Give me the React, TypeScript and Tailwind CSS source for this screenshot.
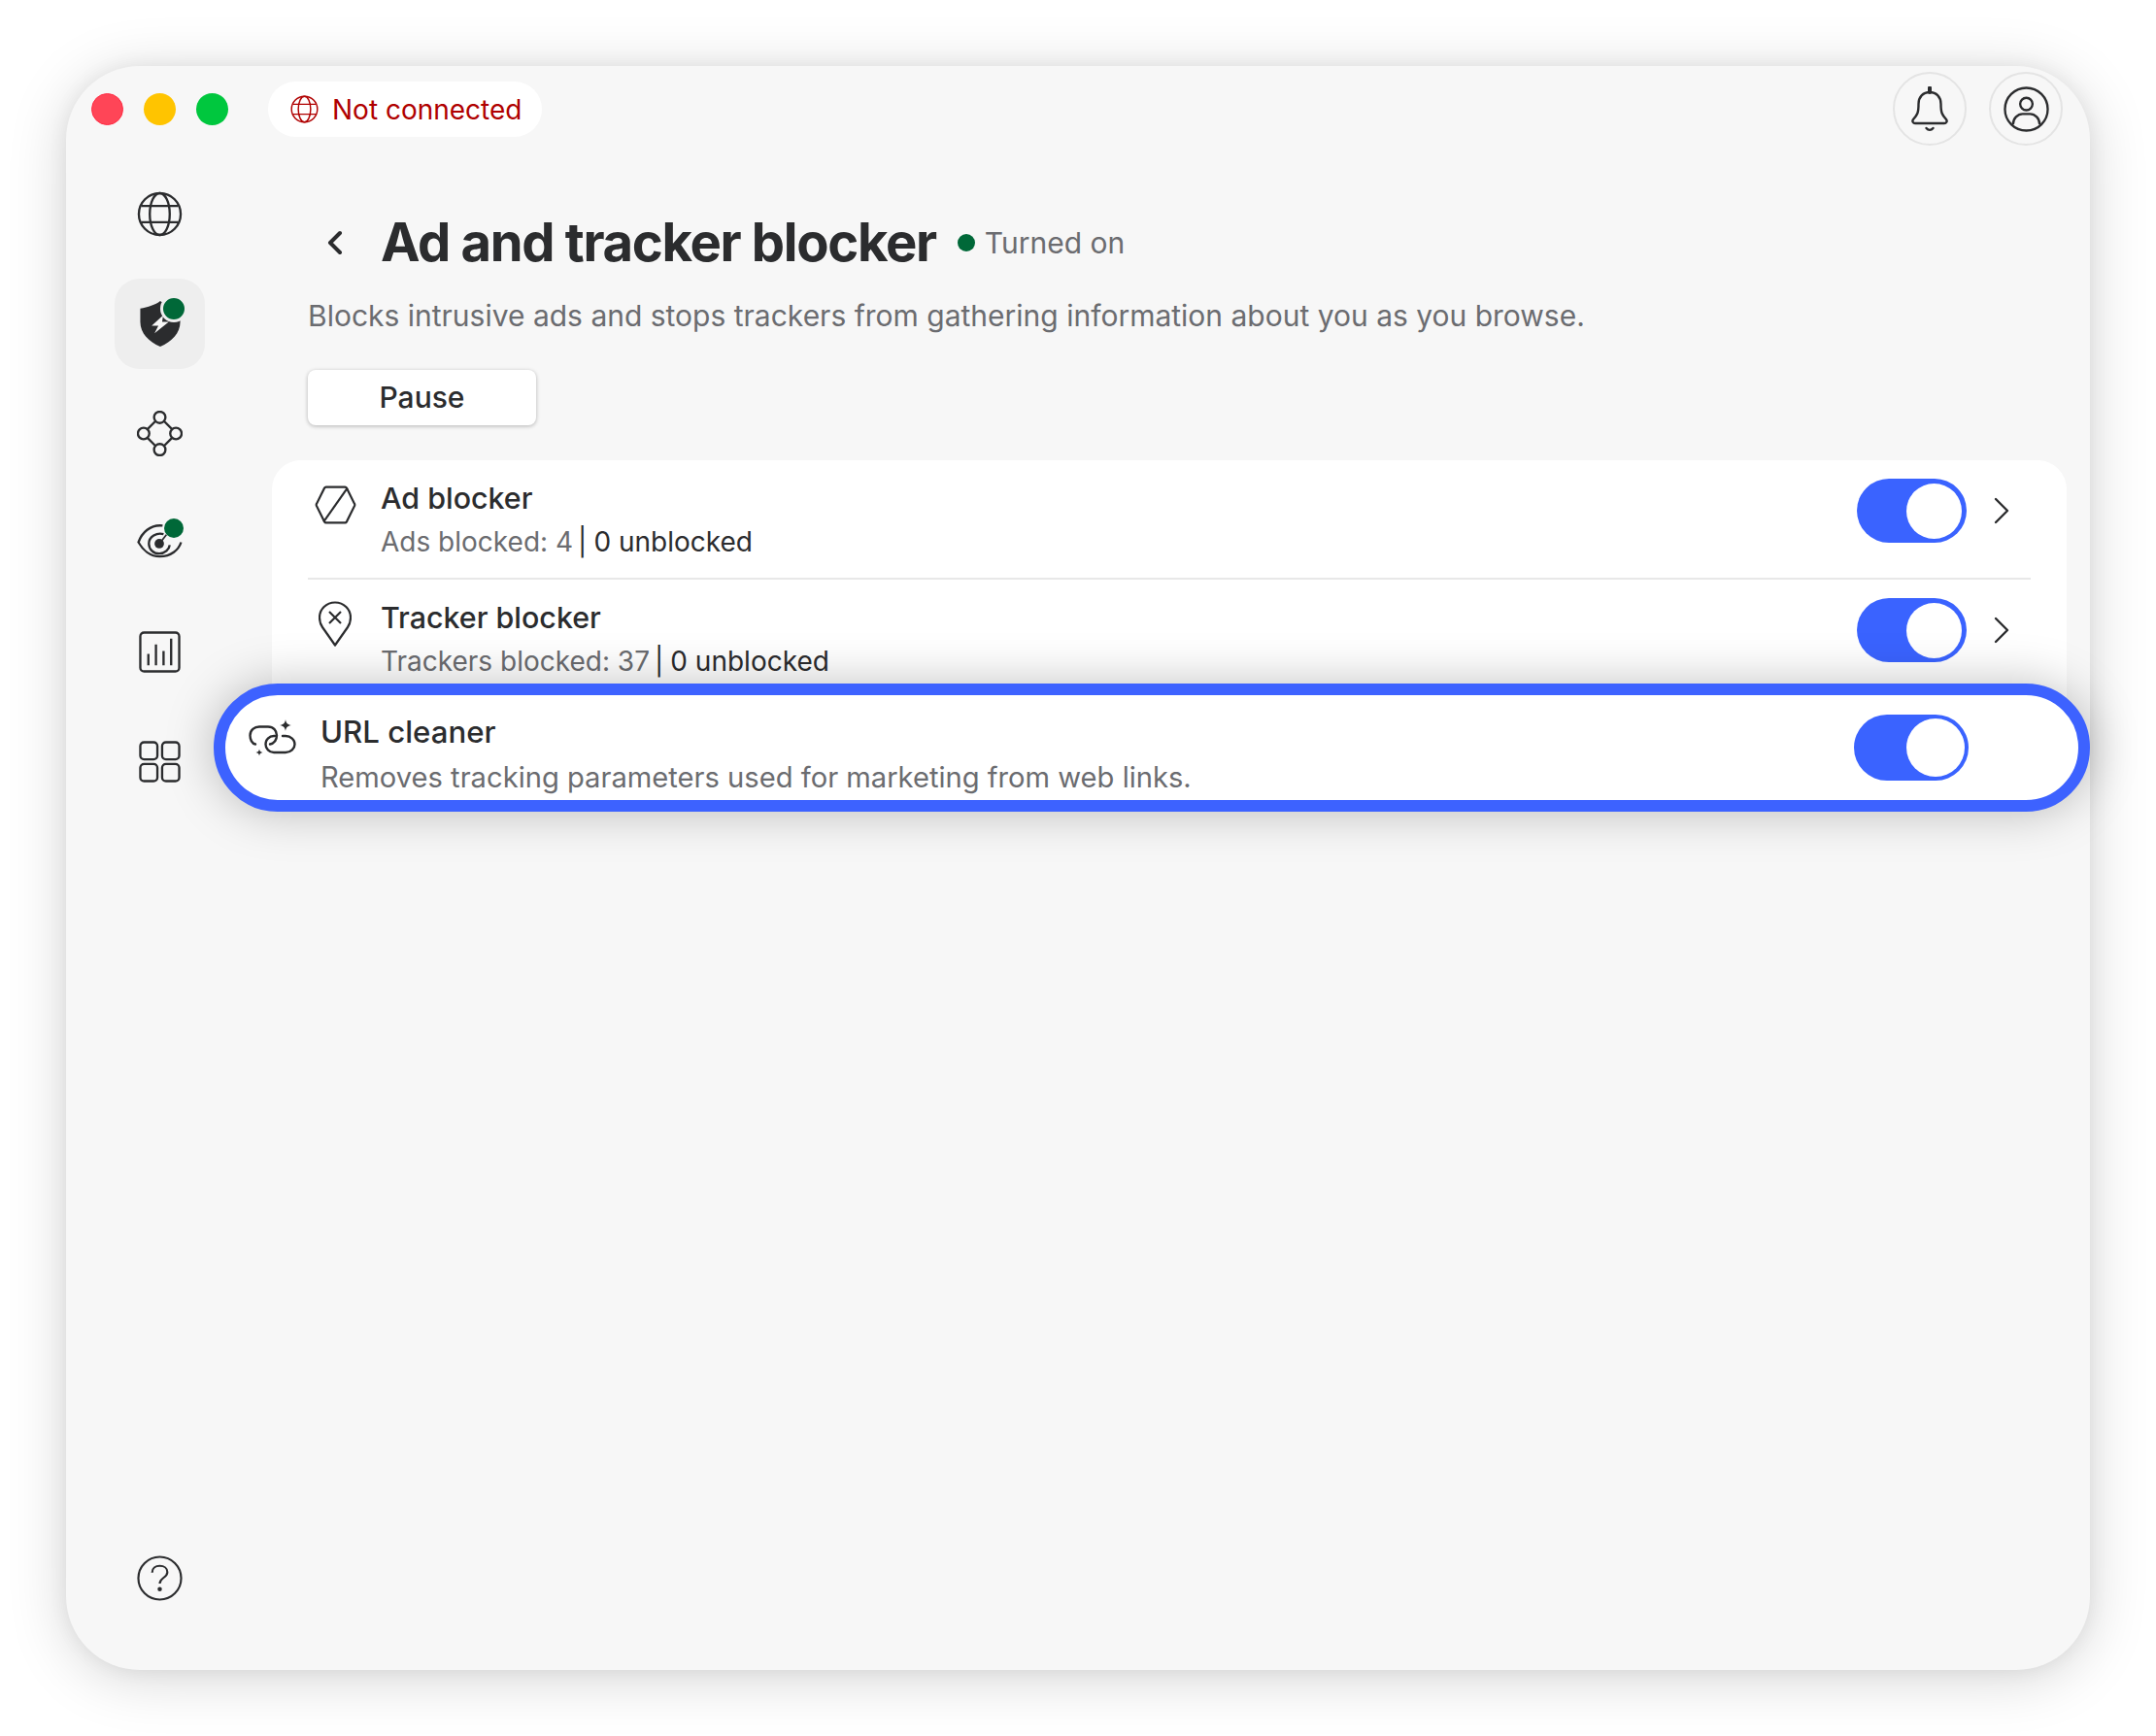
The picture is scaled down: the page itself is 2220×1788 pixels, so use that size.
import React from 'react';
import { ChevronLeft, ChevronRight } from 'lucide-react';

const iconStroke = '#2b2c2e';

const GlobeIcon: React.FC<{ className: string; color?: string }> = ({ className, color = iconStroke }) => (
  <svg viewBox="0 0 48 48" fill="none" stroke={color} strokeWidth="2.4" className={className}>
    <circle cx="24" cy="24" r="22" />
    <ellipse cx="24" cy="24" rx="10.5" ry="22" />
    <path d="M4.5 15.5h39M4.5 32.5h39" />
  </svg>
);

const ShieldIcon = () => (
  <svg viewBox="0 0 42 48" className="w-[42px] h-[47px]">
    <path
      d="M21 0C16 4 8 6.500 0 8v14c0 12 9 21 21 26 12-5 21-14 21-26V8C34 6.500 26 4 21 0Z"
      fill={iconStroke}
    />
    <path d="M24 15 12 26h7l-4 8 15-12h-7l1-7Z" fill="#f7f7f7" />
  </svg>
);

const NetworkIcon = () => (
  <svg viewBox="0 0 48 48" fill="none" stroke={iconStroke} strokeWidth="2.4" className="w-[47px] h-[47px]">
    <circle cx="24" cy="7" r="6" />
    <circle cx="24" cy="41" r="6" />
    <circle cx="7" cy="24" r="6" />
    <circle cx="41" cy="24" r="6" />
    <path d="M19.500 11 11 19.500M28.500 11 37 19.500M11 28.500 19.500 37M37 28.500 28.500 37" />
  </svg>
);

const EyeIcon = () => (
  <svg viewBox="0 0 48 40" fill="none" stroke={iconStroke} strokeWidth="2.4" className="w-[47px] h-[39px]">
    <path d="M27 2.500C14 1 5 10 1.500 20 6 28 14 35 24 35 36 35 44 28 46.500 20" />
    <path d="M28 11.500C21 9.500 12.500 14 12.500 21.500 12.500 27.500 17.500 32 23.500 32 29.500 32 34 27.500 34.500 23" />
    <circle cx="23.500" cy="21.500" r="5" fill={iconStroke} stroke="none" />
    <path d="M24 21 31 12" strokeWidth="1.800" />
  </svg>
);

const ChartIcon = () => (
  <svg viewBox="0 0 44 44" fill="none" stroke={iconStroke} strokeWidth="2.4" className="w-[43px] h-[43px]">
    <rect x="1.500" y="1.500" width="41" height="41" rx="4" />
    <path d="M10 36V24M18 36V14M26 36V21M34 36V8" />
  </svg>
);

const GridIcon = () => (
  <svg viewBox="0 0 44 44" fill="none" stroke={iconStroke} strokeWidth="2.4" className="w-[43px] h-[43px]">
    <rect x="1.500" y="1.500" width="18" height="18" rx="4" />
    <rect x="24.500" y="1.500" width="18" height="18" rx="4" />
    <rect x="1.500" y="24.500" width="18" height="18" rx="4" />
    <rect x="24.500" y="24.500" width="18" height="18" rx="4" />
  </svg>
);

const HelpIcon = () => (
  <svg viewBox="0 0 48 48" fill="none" stroke={iconStroke} strokeWidth="2.2" className="w-[47px] h-[47px]">
    <circle cx="24" cy="24" r="22.500" />
    <path d="M16 18c0-4.500 3.500-7 8-7s8 2.500 8 6.500c0 6-8 6-8 12" />
    <circle cx="24" cy="35.500" r="1.200" fill={iconStroke} />
  </svg>
);

const BellIcon = () => (
  <svg viewBox="0 0 38 47" fill="none" stroke={iconStroke} strokeWidth="2.4" className="w-[38px] h-[47px]">
    <path d="M19 6c-7 0-11.500 5-11.500 12 0 9-1 11-5.500 16-1.500 2 0 4 2 4h30c2 0 3.500-2 2-4-4.500-5-5.500-7-5.500-16C30.500 11 26 6 19 6Z" />
    <path d="M19 6V1.500" strokeWidth="4" strokeLinecap="round" />
    <path d="M15.500 43c2 2.500 5 2.500 7 0" strokeLinecap="round" />
  </svg>
);

const UserIcon = () => (
  <svg viewBox="0 0 48 48" fill="none" stroke={iconStroke} strokeWidth="2.4" className="w-[47px] h-[47px]">
    <circle cx="24" cy="24" r="22.500" />
    <circle cx="24" cy="18.500" r="6.500" />
    <path d="M10 40c0-6.500 5-11 10-11h8c5 0 10 4.500 10 11" />
  </svg>
);

const HexIcon = () => (
  <svg viewBox="0 0 44 38" fill="none" stroke={iconStroke} strokeWidth="2.2" strokeLinejoin="round" preserveAspectRatio="none" className="w-[43px] h-[40px] mt-[2px]">
    <path d="M12 1.500h20a2 2 0 0 1 1.700 1L42 18a2 2 0 0 1 0 2l-8.300 15.500a2 2 0 0 1-1.700 1H12a2 2 0 0 1-1.700-1L2 20a2 2 0 0 1 0-2l8.300-15.500a2 2 0 0 1 1.700-1Z" />
    <path d="M34.500 2.500 9.500 35.500" />
  </svg>
);

const PinIcon = () => (
  <svg viewBox="0 0 34 47" fill="none" stroke={iconStroke} strokeWidth="2.2" className="w-[34px] h-[47px] mt-[-2px]">
    <path d="M17 45.500 4 27C1.500 23.500 1 20.500 1 17 1 8.500 8 1.500 17 1.500S33 8.500 33 17c0 3.500-.5 6.500-3 10L17 45.500Z" strokeLinejoin="round" />
    <path d="m11 11 12 12M23 11 11 23" />
  </svg>
);

const LinkIcon = () => (
  <svg viewBox="0 0 50 41" fill="none" stroke={iconStroke} strokeWidth="2.4" strokeLinecap="round" className="w-[50px] h-[41px]">
    <path d="M7 25.500C3.500 25 1.500 20.500 1.500 16.500 1.500 11 6 7.500 11 7.500H20C25.500 7.500 29 11.500 29 16.500 29 21 26 25 22 25.500" />
    <path d="M35 17H38C43.500 17 47.500 21 47.500 25.500 47.500 30 43.500 34 38 34H26C21 34 17.500 30 17.500 25.500 17.500 21 21 17 26 17H27" />
    <path d="M38 0c.7 4 2 5.300 6 6-4 .7-5.300 2-6 6-.7-4-2-5.300-6-6 4-.7 5.300-2 6-6Z" fill={iconStroke} stroke="none" />
    <path d="M11 30.500c.4 2.200 1.300 3.100 3.500 3.500-2.200.4-3.100 1.300-3.500 3.500-.4-2.200-1.300-3.100-3.500-3.500 2.200-.4 3.100-1.300 3.500-3.500Z" fill={iconStroke} stroke="none" />
  </svg>
);

const Toggle: React.FC<{ large?: boolean }> = ({ large }) =>
  large ? (
    <div className="w-[118px] h-[68px] rounded-full bg-[#3a63ff] flex items-center justify-end pr-[4px]">
      <div className="w-[60px] h-[60px] rounded-full bg-white" />
    </div>
  ) : (
    <div className="w-[113px] h-[66px] rounded-full bg-[#3a63ff] flex items-center justify-end pr-[5px]">
      <div className="w-[57px] h-[57px] rounded-full bg-white" />
    </div>
  );

const SideItem: React.FC<{ active?: boolean; children: React.ReactNode }> = ({ active, children }) => (
  <div className={`relative w-[93px] h-[93px] rounded-[26px] flex items-center justify-center ${active ? 'bg-[#eeeeee]' : ''}`}>
    {children}
  </div>
);

const BlockerRow: React.FC<{ icon: React.ReactNode; title: string; count: string; rest: string }> = ({ icon, title, count, rest }) => (
  <div className="h-[121px] flex items-start pt-[19px]">
    <div className="w-[56px] mr-[19px] shrink-0 pt-[5px] flex justify-center">{icon}</div>
    <div className="flex-1 min-w-0">
      <div className="text-[30.400px] leading-[40px] font-medium text-[#2b2c2e]">{title}</div>
      <div className="text-[28px] leading-[40px] mt-[5px] text-[#6b6c70] flex">
        <span>{count}</span>
        <span className="ml-[5px] text-[#2b2c2e]">|</span>
        <span className="ml-[7px] text-[#2b2c2e]">{rest}</span>
      </div>
    </div>
    <Toggle />
    <ChevronRight className="w-[48px] h-[48px] ml-[12px] mr-[6px] mt-[9px]" color={iconStroke} strokeWidth={1.2} />
  </div>
);

export default function App() {
  return (
    <div className="w-[2220px] h-[1788px] bg-white pt-[68px] pl-[68px] font-['Inter',sans-serif] overflow-hidden">
      <div className="w-[2084px] h-[1652px] rounded-[76px] bg-[#f7f7f7] shadow-[0_0_20px_rgba(0,0,0,0.06),0_8px_60px_rgba(0,0,0,0.17)] flex flex-col relative">
        {/* title bar */}
        <div className="h-[106px] shrink-0 flex items-start">
          <div className="flex gap-[21px] pl-[26px] pt-[28px]">
            <div className="w-[33px] h-[33px] rounded-full bg-[#ff4557] border border-[#ff2a42]" />
            <div className="w-[33px] h-[33px] rounded-full bg-[#ffc400]" />
            <div className="w-[33px] h-[33px] rounded-full bg-[#00c73e]" />
          </div>
          <div className="ml-[41px] mt-[16px] h-[57px] w-[282px] rounded-full bg-white flex items-center pl-[23px] gap-[14px]">
            <GlobeIcon className="w-[29px] h-[29px]" color="#b00000" />
            <span className="text-[28px] text-[#b00000] whitespace-nowrap">Not connected</span>
          </div>
          <div className="ml-auto flex gap-[23px] pt-[6px] pr-[28px]">
            <div className="w-[76px] h-[76px] rounded-full border-2 border-[#e4e4e4] flex items-center justify-center">
              <BellIcon />
            </div>
            <div className="w-[76px] h-[76px] rounded-full border-2 border-[#e4e4e4] flex items-center justify-center">
              <UserIcon />
            </div>
          </div>
        </div>

        <div className="flex-1 flex min-h-0">
          {/* sidebar */}
          <div className="w-[212px] shrink-0 pl-[50px] flex flex-col pb-[48px]">
            <div className="flex flex-col gap-[19.800px]">
              <SideItem><GlobeIcon className="w-[47px] h-[47px]" /></SideItem>
              <SideItem active>
                <ShieldIcon />
                <div className="absolute top-[17px] left-[47px] w-[28px] h-[28px] rounded-full bg-[#006838] border-[3px] border-[#eeeeee]" />
              </SideItem>
              <SideItem><NetworkIcon /></SideItem>
              <SideItem>
                <EyeIcon />
                <div className="absolute top-[22px] left-[51px] w-[20px] h-[20px] rounded-full bg-[#006838]" />
              </SideItem>
              <SideItem><ChartIcon /></SideItem>
              <SideItem><GridIcon /></SideItem>
            </div>
            <div className="mt-auto"><SideItem><HelpIcon /></SideItem></div>
          </div>

          {/* main */}
          <div className="flex-1 min-w-0 pr-[24px]">
            <div className="pl-[37px]">
              <div className="h-[76px] mt-[38px] flex items-center">
                <ChevronLeft className="w-[40px] h-[40px] ml-[8px]" color={iconStroke} strokeWidth={2.4} />
                <h1 className="ml-[27px] text-[54.400px] font-bold tracking-[-1.330px] text-[#2b2c2e] whitespace-nowrap">Ad and tracker blocker</h1>
                <div className="ml-[22px] w-[18px] h-[18px] rounded-full bg-[#006838]" />
                <span className="ml-[10px] text-[30px] text-[#6b6c70]">Turned on</span>
              </div>
              <p className="mt-[17px] text-[30px] leading-[40px] text-[#6b6c70] whitespace-nowrap">
                Blocks intrusive ads and stops trackers from gathering information about you as you browse.
              </p>
              <button className="mt-[36px] block w-[235px] h-[57px] rounded-[8px] bg-white shadow-[0_1px_4px_rgba(0,0,0,0.28)] text-[30px] font-medium text-[#2b2c2e]">
                Pause
              </button>
            </div>

            <div className="relative mt-[36px] h-[244px] rounded-t-[30px] bg-white px-[37px]">
              <BlockerRow icon={<HexIcon />} title="Ad blocker" count="Ads blocked: 4" rest="0 unblocked" />
              <div className="h-[2px] bg-[#e8e8e8]" />
              <BlockerRow icon={<PinIcon />} title="Tracker blocker" count="Trackers blocked: 37" rest="0 unblocked" />

              {/* highlighted row, drawn over the card */}
              <div className="absolute left-[-60px] right-[-24px] top-[230px] h-[132px] rounded-full border-[12px] border-[#3d62ff] bg-white shadow-[0_0_50px_rgba(0,0,0,0.25)] flex items-center pl-[24px] pr-[113px]">
                <div className="mt-[-18px]"><LinkIcon /></div>
                <div className="ml-[24px] flex-1 min-w-0 pt-[15px]">
                  <div className="text-[31.200px] leading-[40px] font-medium text-[#2b2c2e]">URL cleaner</div>
                  <div className="text-[29.150px] leading-[40px] mt-[7px] text-[#6b6c70]">Removes tracking parameters used for marketing from web links.</div>
                </div>
                <Toggle large />
              </div>
            </div>
          </div>
        </div>
      </div>
    </div>
  );
}
